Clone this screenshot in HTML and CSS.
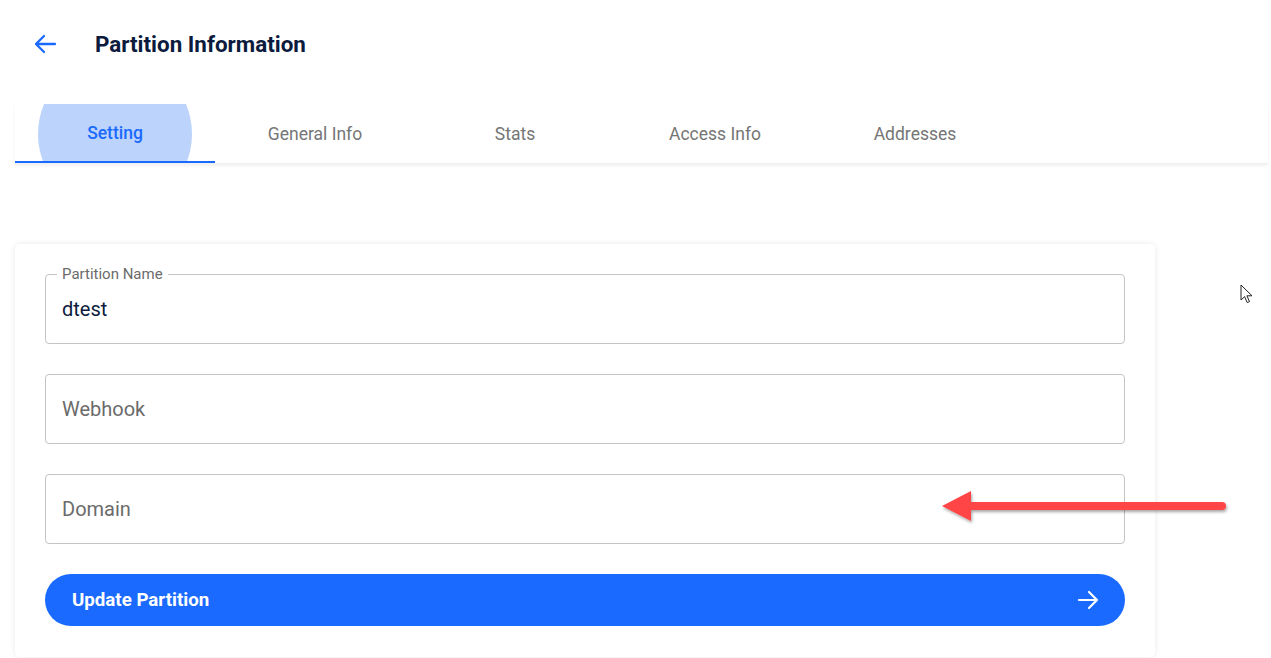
FILE: index.html
```html
<!DOCTYPE html>
<html lang="en">
<head>
    <meta charset="UTF-8">
    <meta name="viewport" content="width=device-width, initial-scale=1.0">
    <title>Partition Information</title>
    <link rel="stylesheet" href="styles.css">
</head>
<body>
    <header class="top">
        <a class="back" href="#">
            <svg width="24" height="24" viewBox="0 0 24 24"><path d="M22 12H3M11 4l-8 8 8 8" fill="none" stroke="#1a6aff" stroke-width="2.3" stroke-linecap="round" stroke-linejoin="round"/></svg>
        </a>
        <h1>Partition Information</h1>
    </header>

    <nav class="tabs">
        <div class="tab active"><span class="ripple"></span><span class="tab-label">Setting</span></div>
        <div class="tab"><span class="tab-label">General Info</span></div>
        <div class="tab"><span class="tab-label">Stats</span></div>
        <div class="tab"><span class="tab-label">Access Info</span></div>
        <div class="tab"><span class="tab-label">Addresses</span></div>
    </nav>

    <main class="page">
        <form class="card">
            <div class="field">
                <label class="float">Partition Name</label>
                <input type="text" value="dtest">
            </div>
            <div class="field">
                <input type="text" placeholder="Webhook">
            </div>
            <div class="field">
                <input type="text" placeholder="Domain">
            </div>
            <button type="button" class="btn">
                <span>Update Partition</span>
                <svg width="24" height="24" viewBox="0 0 24 24"><path d="M3 12h18M13 4l8 8-8 8" fill="none" stroke="#fff" stroke-width="2.2" stroke-linecap="round" stroke-linejoin="round"/></svg>
            </button>
        </form>
    </main>

    <!-- callout arrow pointing at the Domain field -->
    <svg class="callout" width="300" height="50" viewBox="0 0 300 50">
        <defs>
            <filter id="drop" x="-10%" y="-50%" width="120%" height="200%">
                <feDropShadow dx="1" dy="2" stdDeviation="1.5" flood-color="#000" flood-opacity="0.35"/>
            </filter>
        </defs>
        <g filter="url(#drop)">
            <line x1="26" y1="21" x2="284" y2="21" stroke="#ff4444" stroke-width="8" stroke-linecap="round"/>
            <polygon points="4,21 33,6 33,36" fill="#ff4444"/>
        </g>
    </svg>

    <svg class="cursor" width="14" height="20" viewBox="0 0 14 20">
        <path d="M1 1v15l3.6-3.4 2.6 6 2.3-1-2.6-5.8H12z" fill="#fff" stroke="#222" stroke-width="1" stroke-linejoin="round"/>
    </svg>
</body>
</html>
```

FILE: styles.css
```css
* {
  box-sizing: border-box;
  margin: 0;
  padding: 0;
  font-family: Roboto, 'Liberation Sans', sans-serif;
}

body {
  --blue: #1a6aff;
  --navy: #0c1b3d;
  --grey: #757575;
  --line: #c4c4c4;

  background: #ffffff;
  width: 1271px;
  height: 658px;
  overflow: hidden;
  position: relative;
}

.top {
  display: flex;
  align-items: center;
  height: 88px;
  padding-left: 33px;
}

.back {
  display: flex;
  width: 24px;
  height: 24px;
}

.top h1 {
  margin-left: 38px;
  font-size: 22.4px;
  font-weight: 700;
  color: var(--navy);
}

.tabs {
  display: flex;
  margin: 16px 3px 0 15px;
  height: 60px;
  box-shadow: 0 2px 3px rgba(0, 0, 0, 0.06);
  border-bottom: 1px solid #f0f0f2;
}

.tab {
  width: 200px;
  position: relative;
  overflow: hidden;
  display: flex;
  align-items: center;
  justify-content: center;
  font-size: 17.5px;
  color: var(--grey);
}

.tab-label {
  position: relative;
  margin-top: 1px;
}

.tab.active {
  color: var(--blue);
  font-weight: 500;
  border-bottom: 2px solid var(--blue);
}

/* pressed ripple left on the active tab */
.ripple {
  position: absolute;
  width: 154px;
  height: 154px;
  left: 23px;
  top: -47px;
  border-radius: 50%;
  background: #bcd3fb;
}

.page {
  padding: 80px 0 0 15px;
}

.card {
  width: 1140px;
  height: 413px;
  padding: 30px;
  border-radius: 5px;
  box-shadow: 0 0 6px rgba(0, 0, 0, 0.09);
  display: flex;
  flex-direction: column;
  gap: 30px;
}

.field {
  position: relative;
  height: 70px;
  border: 1px solid var(--line);
  border-radius: 4px;
  padding: 0 16px;
  display: flex;
  align-items: center;
}

/* label sitting on the top border */
.float {
  position: absolute;
  top: -10px;
  left: 11px;
  padding: 0 5px;
  background: #ffffff;
  font-size: 15px;
  line-height: 18px;
  color: #6b6b6b;
}

.field input {
  border: none;
  outline: none;
  width: 100%;
  font-size: 20px;
  color: var(--navy);
  font-family: Roboto, 'Liberation Sans', sans-serif;
  background: transparent;
}

.field input::placeholder {
  color: #6b6b6b;
}

.btn {
  height: 52px;
  border: none;
  border-radius: 26px;
  background: var(--blue);
  color: #ffffff;
  font-size: 18.7px;
  font-weight: 700;
  display: flex;
  align-items: center;
  justify-content: space-between;
  padding: 0 25px 0 27px;
}

.callout {
  position: absolute;
  left: 938px;
  top: 485px;
}

.cursor {
  position: absolute;
  left: 1240px;
  top: 284px;
}
```
